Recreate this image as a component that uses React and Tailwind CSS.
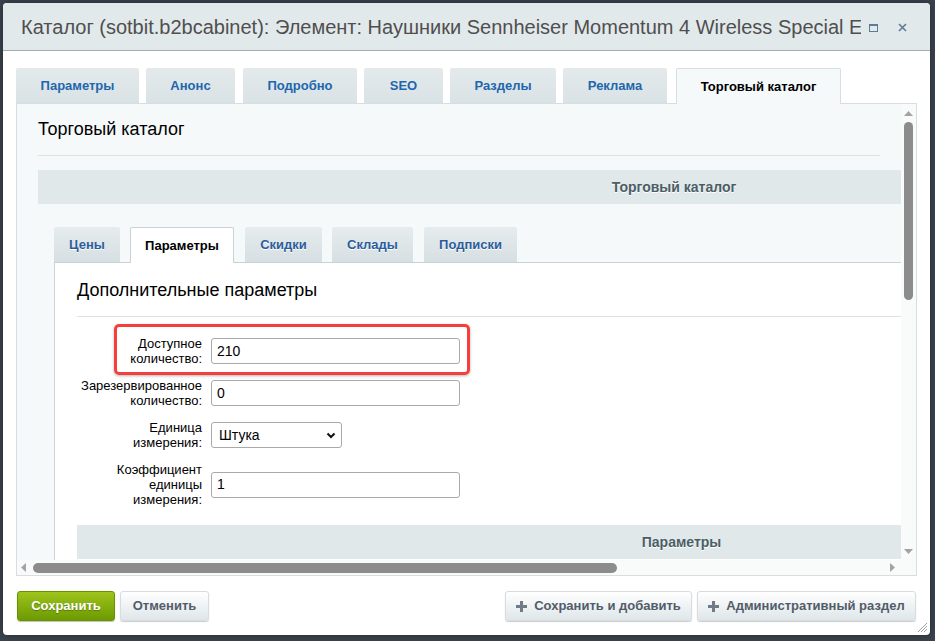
import React from "react";

const mainTabs = [
  { label: "Параметры", cls: "w-[123px]" },
  { label: "Анонс", cls: "w-[89px] ml-[7px]" },
  { label: "Подробно", cls: "w-[114px] ml-[8px]" },
  { label: "SEO", cls: "w-[79px] ml-[7px]" },
  { label: "Разделы", cls: "w-[106px] ml-[7px]" },
  { label: "Реклама", cls: "w-[104px] ml-[7px]" },
];

const subTabs = [
  { label: "Цены", cls: "w-[66px]" },
  { label: "Параметры", cls: "w-[104px] ml-[10px]", active: true },
  { label: "Скидки", cls: "w-[77px] ml-[11px]" },
  { label: "Склады", cls: "w-[81px] ml-[10px]" },
  { label: "Подписки", cls: "w-[93px] ml-[11px]" },
];

const Plus = () => (
  <svg width="11" height="11" viewBox="0 0 11 11" className="mr-[7px]">
    <rect x="4" y="0" width="3" height="11" fill="#6f7b85" />
    <rect x="0" y="4" width="11" height="3" fill="#6f7b85" />
  </svg>
);

const FormRow = ({ label, children, highlight }) => (
  <div className="relative flex items-center py-[6px]">
    {highlight && (
      <div className="absolute left-[37px] top-[-6px] w-[356px] h-[51px] border-[3px] border-[#f4403a] rounded-[5px] shadow-[0_1px_3px_rgba(0,0,0,0.3)]" />
    )}
    <div className="w-[125px] text-right text-[13px] leading-[15px] text-black">{label}</div>
    <div className="ml-[9px]">{children}</div>
  </div>
);

const TextInput = ({ value }) => (
  <div className="w-[249px] h-[26px] border border-[#a9a9a9] rounded-[3px] bg-white flex items-center pl-[5px] text-[14px] text-black">
    {value}
  </div>
);

export default function App() {
  return (
    <div className="w-[935px] h-[641px] bg-[#3b444e] pt-[3px] pl-[3px] font-['Liberation_Sans',Arial,sans-serif]">
      <div className="relative w-[927px] h-[632px] bg-white rounded-[4px] overflow-hidden shadow-[0_0_8px_rgba(0,0,0,0.4)]">
        {/* title bar */}
        <div className="h-[48px] bg-[#e2e9eb] border-b border-[#a6adb0] flex items-center pl-[18px] pr-[22px]">
          <div className="text-[20px] text-[#4f4f4f] whitespace-nowrap overflow-hidden w-[840px]">
            Каталог (sotbit.b2bcabinet): Элемент: Наушники Sennheiser Momentum 4 Wireless Special E
          </div>
          <div className="ml-[8px] flex items-center">
            <div className="w-[9px] h-[8px] border border-[#5d7b98] border-t-2 mt-[2px]" />
            <svg width="9" height="9" viewBox="0 0 9 9" className="ml-[20px] mt-[2px]">
              <path d="M1 1 L8 8 M8 1 L1 8" stroke="#5d7b98" strokeWidth="1.6" />
            </svg>
          </div>
        </div>

        {/* body */}
        <div className="px-[13px] pt-[17px]">
          <div className="relative z-10 flex items-end h-[35px]">
            {mainTabs.map((t) => (
              <div
                key={t.label}
                className={`${t.cls} h-[35px] flex items-center justify-center bg-gradient-to-b from-[#e4eaec] to-[#d9e2e5] rounded-t-[2px] text-[13px] font-bold text-[#2166ad]`}
              >
                {t.label}
              </div>
            ))}
            <div className="w-[165px] ml-[9px] h-[36px] -mb-px flex items-center justify-center bg-[#f5f9f9] border border-b-0 border-[#d5dfe3] rounded-t-[2px] text-[13px] font-bold text-black">
              Торговый каталог
            </div>
          </div>

          <div className="w-[901px] h-[473px] border border-[#d5dfe3] bg-[#f5f9f9] flex flex-col">
            <div className="flex h-[456px]">
              {/* viewport */}
              <div className="w-[884px] h-[456px] overflow-hidden">
                <div className="mx-[21px] w-[842px] pt-[14px] pb-[15px] border-b border-[#dde2e4] text-[18px] leading-[22px] text-black">
                  Торговый каталог
                </div>
                <div className="ml-[21px] mt-[14px] w-[1272px] h-[34px] bg-[#e0e8ea] flex items-center justify-center text-[14px] font-bold text-[#4b5e66] [text-shadow:0_1px_0_#fff]">
                  Торговый каталог
                </div>

                <div className="ml-[37px] mt-[23px] w-[1240px]">
                  <div className="relative z-10 flex items-end h-[35px]">
                    {subTabs.map((t) =>
                      t.active ? (
                        <div
                          key={t.label}
                          className={`${t.cls} h-[36px] -mb-px flex items-center justify-center bg-white border border-b-0 border-[#c9d3d7] rounded-t-[2px] text-[13px] font-bold text-black`}
                        >
                          {t.label}
                        </div>
                      ) : (
                        <div
                          key={t.label}
                          className={`${t.cls} h-[35px] flex items-center justify-center bg-gradient-to-b from-[#e6ecee] to-[#d6dfe2] rounded-t-[2px] text-[13px] font-bold text-[#2b5d9c] [text-shadow:0_1px_0_#fff]`}
                        >
                          {t.label}
                        </div>
                      )
                    )}
                  </div>
                  <div className="bg-white border-l border-t border-[#c9d3d7] pl-[22px] h-[300px]">
                    <div className="w-[1209px] pt-[16px] pb-[15px] border-b border-[#dde2e4] text-[18px] leading-[22px] text-black">
                      Дополнительные параметры
                    </div>
                    <div className="mt-[13px]">
                      <FormRow highlight label={<>Доступное<br />количество:</>}>
                        <TextInput value="210" />
                      </FormRow>
                      <FormRow label={<>Зарезервированное<br />количество:</>}>
                        <TextInput value="0" />
                      </FormRow>
                      <FormRow label={<>Единица<br />измерения:</>}>
                        <div className="w-[131px] h-[26px] border border-[#a9a9a9] rounded-[3px] bg-white flex items-center justify-between pl-[7px] pr-[5px] text-[14px] text-black">
                          <span>Штука</span>
                          <svg width="10" height="7" viewBox="0 0 10 7">
                            <path d="M1.5 1.5 L5 5 L8.5 1.5" fill="none" stroke="#111" strokeWidth="2" />
                          </svg>
                        </div>
                      </FormRow>
                      <FormRow label={<>Коэффициент<br />единицы<br />измерения:</>}>
                        <TextInput value="1" />
                      </FormRow>
                    </div>
                    <div className="mt-[12px] w-[1209px] h-[34px] bg-[#e0e8ea] flex items-center justify-center text-[14px] font-bold text-[#4b5e66] [text-shadow:0_1px_0_#fff]">
                      Параметры
                    </div>
                  </div>
                </div>
              </div>

              {/* vertical scrollbar */}
              <div className="w-[15px] h-[456px] bg-[#f9fafa] flex flex-col items-center">
                <svg width="9" height="5" viewBox="0 0 9 5" className="mt-[7px]">
                  <path d="M0 5 L4.5 0 L9 5 Z" fill="#a3a3a3" />
                </svg>
                <div className="mt-[6px] w-[9px] h-[178px] rounded-[5px] bg-[#8c8c8c]" />
                <div className="flex-1" />
                <svg width="9" height="5" viewBox="0 0 9 5" className="mb-[6px]">
                  <path d="M0 0 L4.5 5 L9 0 Z" fill="#a3a3a3" />
                </svg>
              </div>
            </div>

            {/* horizontal scrollbar */}
            <div className="flex h-[15px]">
              <div className="w-[884px] h-[15px] bg-[#f9fafa] flex items-center">
                <svg width="5" height="9" viewBox="0 0 5 9" className="ml-[4px]">
                  <path d="M5 0 L0 4.5 L5 9 Z" fill="#a3a3a3" />
                </svg>
                <div className="ml-[7px] w-[584px] h-[10px] rounded-[5px] bg-[#8c8c8c]" />
                <div className="flex-1" />
                <svg width="5" height="9" viewBox="0 0 5 9" className="mr-[6px]">
                  <path d="M0 0 L5 4.5 L0 9 Z" fill="#a3a3a3" />
                </svg>
              </div>
              <div className="w-[15px] h-[15px] bg-[#f9fafa]" />
            </div>
          </div>

          {/* buttons */}
          <div className="mt-[15px] flex justify-between">
            <div className="flex ml-px">
              <div className="w-[98px] h-[30px] rounded-[3px] bg-gradient-to-b from-[#9ec31b] to-[#6c9b02] border border-[#6c9100] flex items-center justify-center text-[13px] font-bold text-white [text-shadow:0_1px_1px_rgba(0,0,0,0.3)] shadow-[0_1px_1px_rgba(0,0,0,0.25)]">
                Сохранить
              </div>
              <div className="ml-[5px] w-[89px] h-[30px] rounded-[3px] bg-gradient-to-b from-[#ffffff] to-[#dfe6e9] border border-[#d6dde0] flex items-center justify-center text-[13px] font-bold text-[#535c69] shadow-[0_1px_1px_rgba(0,0,0,0.2)]">
                Отменить
              </div>
            </div>
            <div className="flex mr-px">
              <div className="w-[187px] h-[30px] rounded-[3px] bg-gradient-to-b from-[#ffffff] to-[#dfe6e9] border border-[#d6dde0] flex items-center justify-center text-[13px] font-bold text-[#535c69] shadow-[0_1px_1px_rgba(0,0,0,0.2)]">
                <Plus />
                Сохранить и добавить
              </div>
              <div className="ml-[5px] w-[219px] h-[30px] rounded-[3px] bg-gradient-to-b from-[#ffffff] to-[#dfe6e9] border border-[#d6dde0] flex items-center justify-center text-[13px] font-bold text-[#535c69] shadow-[0_1px_1px_rgba(0,0,0,0.2)]">
                <Plus />
                Административный раздел
              </div>
            </div>
          </div>
        </div>

        {/* resize grip */}
        <svg width="11" height="11" viewBox="0 0 11 11" className="absolute right-[2px] bottom-[2px]">
          <path d="M10 1 L1 10 M10 4 L4 10 M10 7 L7 10" stroke="#a0a0a0" strokeWidth="1" />
        </svg>
      </div>
    </div>
  );
}
